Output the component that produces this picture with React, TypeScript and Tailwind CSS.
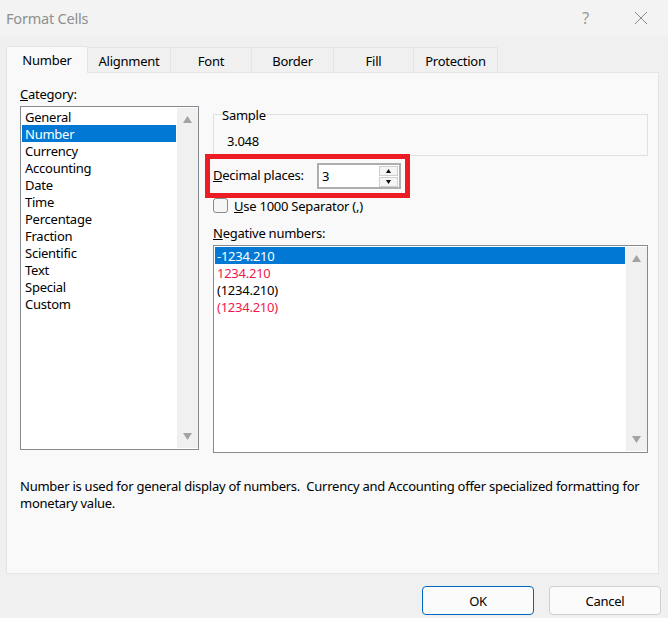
import React from "react";

const categories = ["General", "Number", "Currency", "Accounting", "Date", "Time", "Percentage", "Fraction", "Scientific", "Text", "Special", "Custom"];

const negatives = [
  { label: "-1234.210", color: "text-white" },
  { label: "1234.210", color: "text-[#f0194d]" },
  { label: "(1234.210)", color: "text-black" },
  { label: "(1234.210)", color: "text-[#f0194d]" },
];

const tabs = [
  { label: "Alignment", width: "w-[83px]" },
  { label: "Font", width: "w-[81px]" },
  { label: "Border", width: "w-[82px]" },
  { label: "Fill", width: "w-[80px]" },
  { label: "Protection", width: "w-[84px]" },
];

const Arrow = ({ up, size = "w-[9px] h-[7px]", color = "#a3a3a3" }: { up: boolean; size?: string; color?: string }) => (
  <svg viewBox="0 0 9 7" className={size}>
    <polygon points={up ? "4.5,0 9,7 0,7" : "0,0 9,0 4.5,7"} fill={color} />
  </svg>
);

const ScrollBar = () => (
  <div className="w-[21px] shrink-0 bg-[#f0f0f0] flex flex-col items-center justify-between py-[8px]">
    <Arrow up />
    <Arrow up={false} />
  </div>
);

export default function App() {
  return (
    <div className="w-[668px] h-[618px] bg-[#f0f0f0] text-[13px] leading-[17px] text-black overflow-hidden font-['Noto_Sans','Open_Sans',sans-serif] tracking-[-0.25px]">
      {/* title bar */}
      <div className="h-[36px] bg-[#f3f3f3] flex items-center pl-[6px]">
        <span className="flex-1 text-[14.5px] text-[#8f8f8f] tracking-[-0.2px]">Format Cells</span>
        <span className="text-[16px] text-[#9a9a9a] mr-[46px]">?</span>
        <svg viewBox="0 0 12 12" className="w-[12px] h-[12px] mr-[21px]">
          <path d="M0 0L12 12M12 0L0 12" stroke="#8a8a8a" strokeWidth="1" fill="none" />
        </svg>
      </div>

      {/* tabs */}
      <div className="flex items-end h-[36px] pl-[6px]">
        <div className="w-[82px] h-[27px] -mb-px z-10 bg-[#f9f9f9] border border-b-0 border-[#e5e5e5] rounded-t-[2px] flex items-center justify-center">
          Number
        </div>
        {tabs.map((tab) => (
          <div key={tab.label} className={`${tab.width} h-[25px] pt-[2px] border border-l-0 border-b-0 border-[#e5e5e5] flex items-center justify-center`}>
            {tab.label}
          </div>
        ))}
      </div>

      {/* panel */}
      <div className="ml-[6px] w-[653px] h-[502px] bg-[#f9f9f9] border border-[#e5e5e5] pl-[13px] pr-[10px]">
        <div className="flex gap-[14px]">
          {/* category */}
          <div className="w-[179px] shrink-0 pt-[13px]">
            <div className="mb-[3px]"><span className="underline">C</span>ategory:</div>
            <div className="h-[344px] bg-white border border-[#868a91] flex p-px pr-0">
              <ul className="flex-1 mr-px">
                {categories.map((name) => (
                  <li key={name} className={`h-[17px] pl-[3px] pt-px ${name === "Number" ? "bg-[#0078d4] text-white" : ""}`}>{name}</li>
                ))}
              </ul>
              <ScrollBar />
            </div>
          </div>

          {/* number options */}
          <div className="w-[435px] shrink-0 pt-[34px]">
            <fieldset className="h-[49px] border border-[#e0e0e0] pl-[13px] pt-0">
              <legend className="px-0 ml-[-5px] relative top-px text-[13px] leading-[15px]">Sample</legend>
              <div className="mt-[11px]">3.048</div>
            </fieldset>
            <div className="w-[205px] h-[44px] -ml-[8px] -mt-[2px] relative border-[5px] border-[#ed1c24] flex items-center pl-[3px]">
              <span className="w-[104px] pb-[2px]"><span className="underline">D</span>ecimal places:</span>
              <div className="w-[84px] h-[26px] bg-white border-2 border-[#aeaeae] flex items-center justify-between pl-[3px] pr-px">
                <span>3</span>
                <div className="w-[19px] flex flex-col gap-px">
                  <div className="h-[10px] bg-[#f5f5f5] border border-[#cfcfcf] flex items-center justify-center">
                    <Arrow up size="w-[7px] h-[4px]" color="#111111" />
                  </div>
                  <div className="h-[10px] bg-[#f5f5f5] border border-[#cfcfcf] flex items-center justify-center">
                    <Arrow up={false} size="w-[7px] h-[4px]" color="#111111" />
                  </div>
                </div>
              </div>
            </div>
            <div className="flex items-center h-[15px] gap-[6px]">
              <div className="w-[15px] h-[15px] bg-[#f6f6f6] border border-[#8a8a8a] rounded-[3px]" />
              <span className="pt-[2px]"><span className="underline">U</span>se 1000 Separator (,)</span>
            </div>
            <div className="mt-[12px] mb-[3px]"><span className="underline">N</span>egative numbers:</div>
            <div className="h-[208px] bg-white border border-[#868a91] flex p-px pr-0">
              <ul className="flex-1 mr-px">
                {negatives.map((item, i) => (
                  <li key={i} className={`h-[17px] pl-[2px] pt-px ${item.color} ${i === 0 ? "bg-[#0078d4]" : ""}`}>{item.label}</li>
                ))}
              </ul>
              <ScrollBar />
            </div>
          </div>
        </div>
        <p className="mt-[25px] w-[630px]">
          Number is used for general display of numbers.&nbsp; Currency and Accounting offer specialized formatting for monetary value.
        </p>
      </div>

      {/* buttons */}
      <div className="flex justify-end gap-[15px] pr-[7px] pt-[12px]">
        <button className="w-[112px] h-[29px] pt-[2px] bg-[#fbfbfb] border border-[#0067c0] rounded-[4px]">OK</button>
        <button className="w-[112px] h-[29px] pt-[2px] bg-[#fbfbfb] border border-[#ccd0d5] rounded-[4px]">Cancel</button>
      </div>
    </div>
  );
}
